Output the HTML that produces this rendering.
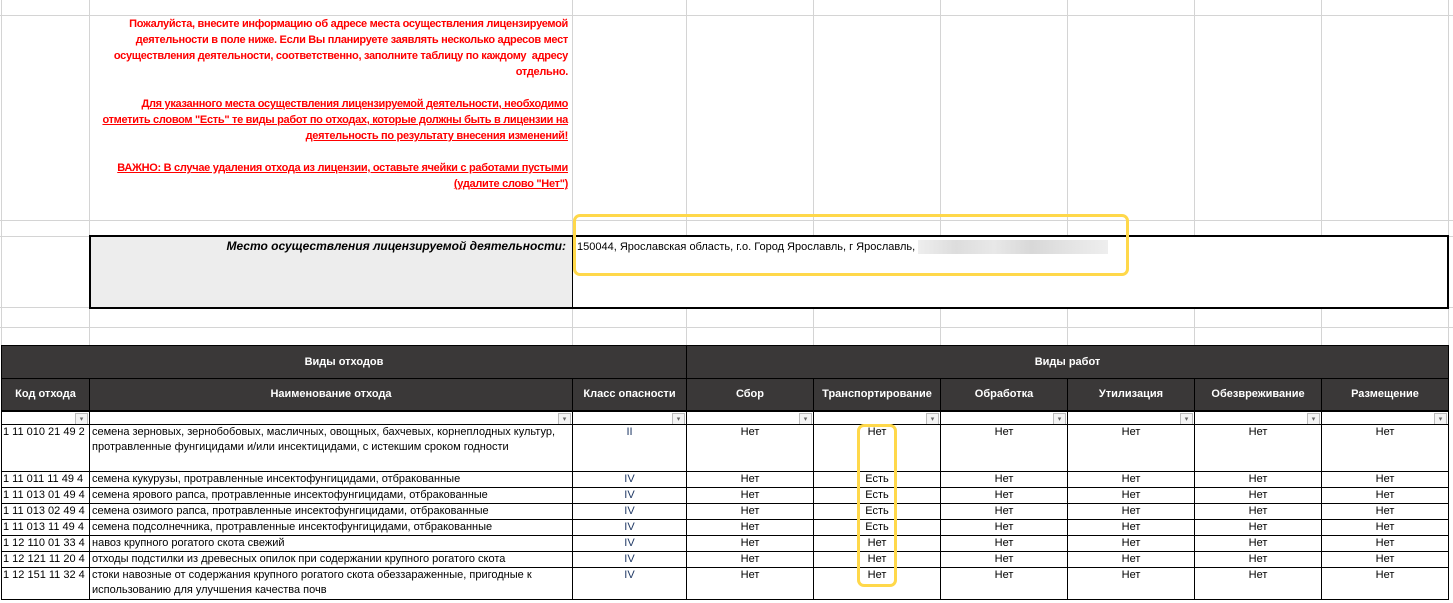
<!DOCTYPE html>
<html><head><meta charset="utf-8"><style>
body{margin:0;width:1453px;height:603px;overflow:hidden;background:#fff;font-family:"Liberation Sans",sans-serif;font-size:11px;position:relative}
.v{position:absolute;top:0;height:345px;width:1px;background:#d4d4d4}
.h{position:absolute;left:0;width:1453px;height:1px;background:#d4d4d4}
.red{position:absolute;left:96px;width:472px;text-align:right;color:#f00;font-weight:bold;font-size:11px;line-height:16px;letter-spacing:-0.3px}
.red u{text-decoration:underline}
table{position:absolute;left:1px;top:345px;border-collapse:collapse;table-layout:fixed}
td{border:1px solid #000;padding:0 2px;overflow:hidden;white-space:nowrap;vertical-align:top;line-height:15px;text-align:center}
.hd td{background:#3a3838;color:#fff;font-weight:bold;vertical-align:middle;border-color:#000}
.f td{height:12px;position:relative;border-top:2px solid #000;line-height:12px}
.dd{position:absolute;right:1px;top:1px;width:11px;height:11px;border:1px solid #bbb;background:#f4f4f4;font-size:7px;line-height:11px;color:#666;text-align:center}
td.l{text-align:left;white-space:normal}
td.c{color:#1f3864}
</style></head><body>
<div class="h" style="top:15px"></div><div class="h" style="top:220px"></div><div class="h" style="top:236px"></div><div class="h" style="top:307px"></div><div class="h" style="top:327px"></div>
<div class="v" style="left:1px"></div><div class="v" style="left:89px"></div><div class="v" style="left:572px"></div><div class="v" style="left:686px"></div><div class="v" style="left:813px"></div><div class="v" style="left:940px"></div><div class="v" style="left:1067px"></div><div class="v" style="left:1194px"></div><div class="v" style="left:1321px"></div><div class="v" style="left:1448px"></div>
<div class="red" style="top:16px">Пожалуйста, внесите информацию об адресе места осуществления лицензируемой деятельности в поле ниже. Если Вы планируете заявлять несколько адресов мест осуществления деятельности, соответственно, заполните таблицу по каждому&nbsp; адресу отдельно.</div>
<div class="red" style="top:96px"><u>Для указанного места осуществления лицензируемой деятельности, необходимо отметить словом "Есть" те виды работ по отходах, которые должны быть в лицензии на деятельность по результату внесения изменений!</u></div>
<div class="red" style="top:160px"><u>ВАЖНО: В случае удаления отхода из лицензии, оставьте ячейки с работами пустыми (удалите слово "Нет")</u></div>
<div style="position:absolute;left:89px;top:235px;width:481px;height:70px;border:2px solid #000;border-right:1px solid #000;background:#ededed"></div>
<div style="position:absolute;left:572px;top:235px;width:874px;height:70px;border:2px solid #000;border-left:1px solid #000;background:#fff"></div>
<div style="position:absolute;left:90px;top:239px;width:476px;text-align:right;font-weight:bold;font-style:italic;font-size:12px">Место осуществления лицензируемой деятельности:</div>
<div style="position:absolute;left:577px;top:240px;font-size:11px">150044, Ярославская область, г.о. Город Ярославль, г Ярославль, <span style="display:inline-block;width:190px;height:14px;vertical-align:middle;background:linear-gradient(90deg,#eee,#ddd 20%,#e8e8e8 40%,#d8d8d8 60%,#e4e4e4 80%,#eee)"></span></div>
<div style="position:absolute;left:573px;top:214px;width:550px;height:56px;border:3px solid #ffd84a;border-radius:7px"></div>
<table>
<colgroup><col style="width:88px"><col style="width:483px"><col style="width:114px"><col style="width:127px"><col style="width:127px"><col style="width:127px"><col style="width:127px"><col style="width:127px"><col style="width:127px"></colgroup>
<tr class="hd" style="height:33px"><td colspan="3">Виды отходов</td><td colspan="6">Виды работ</td></tr>
<tr class="hd" style="height:32px"><td>Код отхода</td><td>Наименование отхода</td><td>Класс опасности</td><td>Сбор</td><td>Транспортирование</td><td>Обработка</td><td>Утилизация</td><td>Обезвреживание</td><td>Размещение</td></tr>
<tr class="f"><td><span class="dd">▾</span></td><td><span class="dd">▾</span></td><td><span class="dd">▾</span></td><td><span class="dd">▾</span></td><td><span class="dd">▾</span></td><td><span class="dd">▾</span></td><td><span class="dd">▾</span></td><td><span class="dd">▾</span></td><td><span class="dd">▾</span></td></tr>
<tr style="height:47px"><td class="l" style="white-space:nowrap;padding:0 1px">1 11 010 21 49 2</td><td class="l">семена зерновых, зернобобовых, масличных, овощных, бахчевых, корнеплодных культур, протравленные фунгицидами и/или инсектицидами, с истекшим сроком годности</td><td class="c">II</td><td>Нет</td><td>Нет</td><td>Нет</td><td>Нет</td><td>Нет</td><td>Нет</td></tr>
<tr style="height:15px"><td class="l" style="white-space:nowrap;padding:0 1px">1 11 011 11 49 4</td><td class="l">семена кукурузы, протравленные инсектофунгицидами, отбракованные</td><td class="c">IV</td><td>Нет</td><td>Есть</td><td>Нет</td><td>Нет</td><td>Нет</td><td>Нет</td></tr>
<tr style="height:15px"><td class="l" style="white-space:nowrap;padding:0 1px">1 11 013 01 49 4</td><td class="l">семена ярового рапса, протравленные инсектофунгицидами, отбракованные</td><td class="c">IV</td><td>Нет</td><td>Есть</td><td>Нет</td><td>Нет</td><td>Нет</td><td>Нет</td></tr>
<tr style="height:15px"><td class="l" style="white-space:nowrap;padding:0 1px">1 11 013 02 49 4</td><td class="l">семена озимого рапса, протравленные инсектофунгицидами, отбракованные</td><td class="c">IV</td><td>Нет</td><td>Есть</td><td>Нет</td><td>Нет</td><td>Нет</td><td>Нет</td></tr>
<tr style="height:15px"><td class="l" style="white-space:nowrap;padding:0 1px">1 11 013 11 49 4</td><td class="l">семена подсолнечника, протравленные инсектофунгицидами, отбракованные</td><td class="c">IV</td><td>Нет</td><td>Есть</td><td>Нет</td><td>Нет</td><td>Нет</td><td>Нет</td></tr>
<tr style="height:15px"><td class="l" style="white-space:nowrap;padding:0 1px">1 12 110 01 33 4</td><td class="l">навоз крупного рогатого скота свежий</td><td class="c">IV</td><td>Нет</td><td>Нет</td><td>Нет</td><td>Нет</td><td>Нет</td><td>Нет</td></tr>
<tr style="height:15px"><td class="l" style="white-space:nowrap;padding:0 1px">1 12 121 11 20 4</td><td class="l">отходы подстилки из древесных опилок при содержании крупного рогатого скота</td><td class="c">IV</td><td>Нет</td><td>Нет</td><td>Нет</td><td>Нет</td><td>Нет</td><td>Нет</td></tr>
<tr style="height:32px"><td class="l" style="white-space:nowrap;padding:0 1px">1 12 151 11 32 4</td><td class="l">стоки навозные от содержания крупного рогатого скота обеззараженные, пригодные к использованию для улучшения качества почв</td><td class="c">IV</td><td>Нет</td><td>Нет</td><td>Нет</td><td>Нет</td><td>Нет</td><td>Нет</td></tr>
</table>
<div style="position:absolute;left:857px;top:424px;width:34px;height:157px;border:3px solid #ffd84a;border-radius:7px"></div>
</body></html>
